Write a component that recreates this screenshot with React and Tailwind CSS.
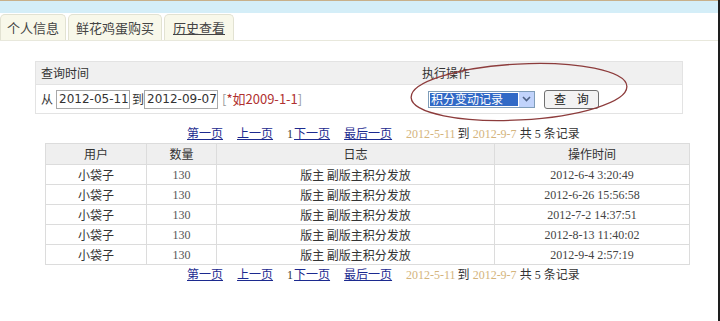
import React from 'react';

const rows = [
  { user: '小袋子', qty: '130', log: '版主 副版主积分发放', time: '2012-6-4 3:20:49' },
  { user: '小袋子', qty: '130', log: '版主 副版主积分发放', time: '2012-6-26 15:56:58' },
  { user: '小袋子', qty: '130', log: '版主 副版主积分发放', time: '2012-7-2 14:37:51' },
  { user: '小袋子', qty: '130', log: '版主 副版主积分发放', time: '2012-8-13 11:40:02' },
  { user: '小袋子', qty: '130', log: '版主 副版主积分发放', time: '2012-9-4 2:57:19' },
];

const sans = "font-['Noto_Sans_CJK_SC',sans-serif]";
const serif = "font-['Liberation_Serif','Noto_Sans_CJK_SC',serif]";

/* pager line, used above and below the table */
const Pager = () => (
  <div className={`flex items-center h-[16px] pl-[187px] text-[12px] ${serif} text-[#333] whitespace-nowrap`}>
    <a className="text-[#1c2a8f] underline">第一页</a>
    <a className="ml-[14px] text-[#1c2a8f] underline">上一页</a>
    <span className="ml-[14px]">1</span>
    <a className="ml-[1px] text-[#1c2a8f] underline">下一页</a>
    <a className="ml-[14px] text-[#1c2a8f] underline">最后一页</a>
    <span className="ml-[14px] text-[#d4b47c]">2012-5-11</span>
    <span className="ml-[2px]">到</span>
    <span className="ml-[3px] text-[#d4b47c]">2012-9-7</span>
    <span className="ml-[3px]">共 5 条记录</span>
  </div>
);

const Tab = ({ label, w, hover }) => (
  <div
    className={`h-[26px] ${w} flex items-center justify-center rounded-t-[5px] border border-b-0 border-[#e2e2d2] bg-[#f8f8ea] text-[13px] text-[#444] ${hover ? 'underline' : ''}`}
  >
    {label}
  </div>
);

const DateBox = ({ value }) => (
  <div className="w-[74px] h-[19px] shrink-0 border border-[#a9a9a9] flex items-center pl-[2px] text-[12px] whitespace-nowrap font-['DejaVu_Sans',sans-serif] text-[#333]">
    {value}
  </div>
);

export default function App() {
  return (
    <div className={`relative w-[720px] h-[321px] overflow-hidden bg-white border-r-2 border-[#1e1e1e] ${sans}`}>
      {/* top band */}
      <div className="h-[13px] bg-[#d4eef8] border-t border-[#c8b08a]" />

      {/* tabs */}
      <div className="flex items-end gap-[2px] h-[28px] border-b border-[#e8e8dc]">
        <Tab label="个人信息" w="w-[66px]" />
        <Tab label="鲜花鸡蛋购买" w="w-[94px]" />
        <Tab label="历史查看" w="w-[70px]" hover />
      </div>

      {/* query box */}
      <div className="ml-[35px] mt-[20px] w-[648px] border border-[#e3e3e3] text-[12px] text-[#333]">
        <div className="grid grid-cols-[385px_1fr] h-[23px] bg-[#f0f0f0] border-b border-[#e3e3e3]">
          <div className="flex items-center pl-[5px]">查询时间</div>
          <div className="flex items-center pl-[1px]">执行操作</div>
        </div>
        <div className="grid grid-cols-[385px_1fr] h-[28px]">
          <div className="flex items-center pl-[5px] whitespace-nowrap">
            <span>从</span>
            <div className="ml-[3px]"><DateBox value="2012-05-11" /></div>
            <span className="ml-[2px]">到</span>
            <DateBox value="2012-09-07" />
            <span className="ml-[4px] text-[#b03030] text-[13px]"><span className="text-[#999]">[</span>*如2009-1-1<span className="text-[#999]">]</span></span>
          </div>
          <div className="flex items-center pl-[7px]">
            <div className="flex h-[17px] w-[107px] border border-[#7f9db9] bg-white">
              <div className="flex-1 bg-[#3169c6] text-white flex items-center pl-[1px] text-[12px] m-[1px]">积分变动记录</div>
              <div className="w-[15px] bg-[#c1d3fb] flex items-center justify-center">
                <svg width="9" height="6" viewBox="0 0 9 6">
                  <path d="M1 1 L4.5 4.5 L8 1" stroke="#4d6185" strokeWidth="1.6" fill="none" />
                </svg>
              </div>
            </div>
            <button className="ml-[9px] w-[55px] h-[19px] rounded-[3px] border border-[#707070] bg-[#f3f3f3] text-[12px] text-[#222] flex items-center justify-center">
              查&nbsp;&nbsp;&nbsp;&nbsp;询
            </button>
          </div>
        </div>
      </div>

      {/* red ellipse marking */}
      <svg className="absolute left-[405px] top-[59px]" width="230" height="66" viewBox="0 0 230 66">
        <ellipse cx="114" cy="33" rx="108" ry="28" transform="rotate(-3 114 33)" fill="none" stroke="#8d3c3c" strokeWidth="1.3" />
      </svg>

      <div className="mt-[12px]">
        <Pager />
      </div>

      {/* table */}
      <table className="ml-[45px] mt-[1px] w-[645px] border-collapse text-[12px] text-[#333]">
        <thead>
          <tr className="h-[21px] bg-[#efefef]">
            <th className="w-[101px] border border-[#dcdcdc] font-normal">用户</th>
            <th className="w-[70px] border border-[#dcdcdc] font-normal">数量</th>
            <th className="w-[278px] border border-[#dcdcdc] font-normal">日志</th>
            <th className="border border-[#dcdcdc] font-normal">操作时间</th>
          </tr>
        </thead>
        <tbody>
          {rows.map((r, i) => (
            <tr key={i} className="h-[20px]">
              <td className="border border-[#dcdcdc] text-center p-0">{r.user}</td>
              <td className={`border border-[#dcdcdc] text-center p-0 ${serif} text-[#555]`}>{r.qty}</td>
              <td className="border border-[#dcdcdc] text-center p-0">{r.log}</td>
              <td className={`border border-[#dcdcdc] text-center p-0 ${serif} text-[#444]`}>{r.time}</td>
            </tr>
          ))}
        </tbody>
      </table>

      <div className="mt-[2px]">
        <Pager />
      </div>
    </div>
  );
}
